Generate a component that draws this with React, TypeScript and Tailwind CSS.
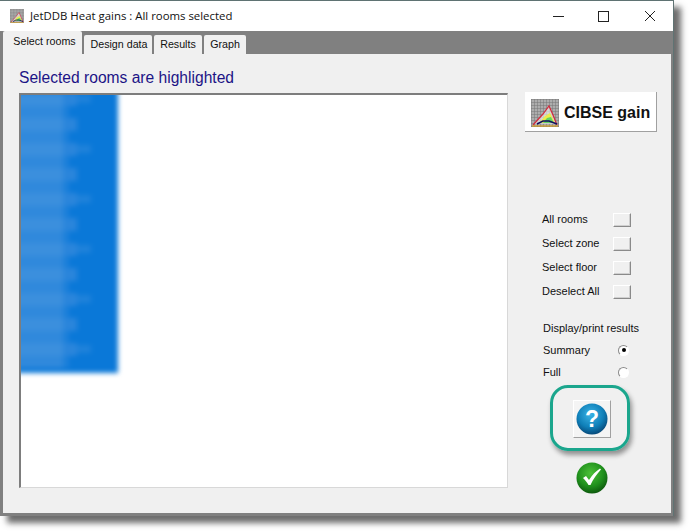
import React from 'react';

const arial = "font-['Liberation_Sans',Arial,sans-serif]";

const ChartIcon = ({ size }: { size: number }) => (
  <svg width={size} height={size} viewBox="0 0 28 28" className="shrink-0">
    <defs>
      <pattern id={`grid${size}`} width="3" height="3" patternUnits="userSpaceOnUse">
        <rect width="3" height="3" fill="#adadad" />
        <path d="M0 0H3M0 0V3" stroke="#777" strokeWidth="1" />
      </pattern>
    </defs>
    <rect width="28" height="28" fill={`url(#grid${size})`} />
    <path d="M3 25 L12 15 L18 7 L22 16 L25 25Z" fill="#f4f4f0" opacity="0.6" />
    <path d="M8 24 L14 17 L19 14 L24 24Z" fill="#ecec4a" />
    <path d="M12 24 L16 19 L20 18 L23 24Z" fill="#63d463" />
    <path d="M2 26 L12 15 L18 7 L22 16 L26 26" fill="none" stroke="#d42a3c" strokeWidth="1.2" />
    <path d="M6 25 L12 22 L18 22 L26 25" fill="none" stroke="#101060" strokeWidth="1.6" />
    <path d="M1 27 H27" stroke="#d8a020" strokeWidth="1.2" />
  </svg>
);

const HelpIcon = () => (
  <svg width="32" height="32" viewBox="0 0 32 32">
    <defs>
      <radialGradient id="helpBall" cx="45%" cy="35%" r="70%">
        <stop offset="0%" stopColor="#3cb4e6" />
        <stop offset="60%" stopColor="#0f7fb8" />
        <stop offset="100%" stopColor="#063f6e" />
      </radialGradient>
    </defs>
    <circle cx="16" cy="16" r="15.5" fill="url(#helpBall)" />
    <text x="16" y="24" textAnchor="middle" fontSize="23" fontWeight="700" fill="#fff" fontFamily="'Liberation Sans', sans-serif">?</text>
  </svg>
);

const OkIcon = () => (
  <svg width="32" height="32" viewBox="0 0 32 32">
    <defs>
      <radialGradient id="okBall" cx="45%" cy="35%" r="70%">
        <stop offset="0%" stopColor="#4cc238" />
        <stop offset="60%" stopColor="#1f8f1c" />
        <stop offset="100%" stopColor="#0b4f0b" />
      </radialGradient>
    </defs>
    <circle cx="16" cy="16" r="15.5" fill="url(#okBall)" />
    <path d="M7 16 L10 14 L13 18 C16 13 20 9 24 6.5 L25 7.5 C21 12 17 17 14.5 23 L12.5 23 C11 20 9 18 7 16Z" fill="#fff" />
  </svg>
);

const tabs = [
  { label: 'Design data', width: 'w-[68px] pl-[2px]' },
  { label: 'Results', width: 'w-[48px]' },
  { label: 'Graph', width: 'w-[42px]' },
];
const selectors = ['All rooms', 'Select zone', 'Select floor', 'Deselect All'];
// smudged room names in the list
const rooms = [0, 1, 2, 3, 4, 5, 6, 7, 8, 9, 10, 11, 12, 13, 14, 15, 16, 17, 18, 19, 20, 21];

export default function App() {
  return (
    <div className="w-[689px] h-[531px] bg-white overflow-hidden">
      <div className={`w-[674px] h-[516px] flex flex-col border-t border-r border-[#5f7373] shadow-[7px_7px_6px_rgba(60,60,60,0.75)] ${arial}`}>
        {/* Title bar */}
        <div className="h-[30px] bg-white flex items-center shrink-0">
          <div className="ml-[10px] mr-[6px]">
            <ChartIcon size={14} />
          </div>
          <span className="text-[11.4px] text-[#111] font-['Open_Sans',sans-serif]">JetDDB Heat gains : All rooms selected</span>
          <div className="ml-auto flex items-center">
            <svg width="46" height="30" viewBox="0 0 46 30"><path d="M18 15.5H29" stroke="#222" /></svg>
            <svg width="46" height="30" viewBox="0 0 46 30"><rect x="17.5" y="10.5" width="10" height="10" fill="none" stroke="#222" /></svg>
            <svg width="46" height="30" viewBox="0 0 46 30"><path d="M18 10L28 20M28 10L18 20" stroke="#222" /></svg>
          </div>
        </div>

        {/* Tab strip */}
        <div className="h-[23px] bg-[#808080] flex items-end pl-[3px] pr-[2px] shrink-0">
          <div className="h-[23px] w-[79px] bg-[#f0f0f0] rounded-t-[2px] text-[10.7px] text-[#111] flex items-center justify-center pb-[2px] pl-[4px]">Select rooms</div>
          {tabs.map((t) => (
            <div key={t.label} className={`h-[19px] ml-[2px] ${t.width} bg-[#f0f0f0] rounded-t-[2px] text-[10.7px] text-[#111] flex items-center justify-center`}>{t.label}</div>
          ))}
        </div>

        {/* Panel */}
        <div className="flex-1 flex bg-[#808080] pl-[3px] pr-[2px] pb-[3px] min-h-0">
          <div className="flex-1 bg-[#f0f0f0] flex pl-[16px] min-w-0">
            <div className="w-[489px] shrink-0 flex flex-col pb-[25px]">
              <div className="h-[39px] flex items-end pb-[6px] text-[15.6px] leading-[18px] text-[#1c1486]">Selected rooms are highlighted</div>
              <div className="flex-1 bg-white border-t-2 border-l-2 border-t-[#7d7d7d] border-l-[#7d7d7d] border-b border-r border-b-[#d8d8d8] border-r-[#d8d8d8] overflow-hidden">
                <div className="-ml-[6px] -mt-[6px] w-[103px] h-[284px] blur-[2.5px] flex flex-col bg-[#0a78d8] pt-[4px]">
                  {rooms.map((i) => (
                    <div key={i} className="h-[12.5px] flex items-center">
                      <div className={i % 2 === 0 ? 'w-[48px] h-full bg-[#3b8fdd]' : 'w-[48px] h-full bg-[#3089dc]'} />
                      <div className={i % 2 === 0 ? 'w-[14px] h-full bg-[#2a85db]' : 'w-[6px] h-full bg-[#1c80da]'} />
                      <div className={i % 4 === 0 ? 'w-[14px] h-[8px] bg-[#1f82da]' : 'hidden'} />
                    </div>
                  ))}
                </div>
              </div>
            </div>

            {/* Right column */}
            <div className="flex-1 flex flex-col items-start pl-[17px] pt-[38px]">
              <div className="w-[132px] h-[40px] bg-white border-r border-b border-[#a0a0a0] flex items-center pl-[6px] pt-[2px] gap-[5px] text-[16px] font-bold text-[#111]">
                <ChartIcon size={28} />
                <span>CIBSE gain</span>
              </div>

              <div className="mt-[80px] flex flex-col gap-[9px] pl-[17px] w-[106px]">
                {selectors.map((s) => (
                  <div key={s} className="h-[15px] flex items-center justify-between text-[11px] text-[#111]">
                    <span>{s}</span>
                    <span className="w-[18px] h-[14px] bg-[#f0f0f0] border border-t-white border-l-white border-r-[#8a8a8a] border-b-[#8a8a8a] shadow-[inset_-1px_-1px_0_#d0d0d0]" />
                  </div>
                ))}
              </div>

              <div className="mt-[22px] pl-[18px] text-[11px] leading-[14px] text-[#111]">Display/print results</div>
              <div className="mt-[8px] pl-[18px] w-[104px] flex items-center justify-between h-[14px] text-[11px] text-[#111]">
                <span>Summary</span>
                <span className="w-[11px] h-[11px] rounded-full bg-white border border-[#8a8a8a] border-b-white border-r-white flex items-center justify-center">
                  <span className="w-[4px] h-[4px] rounded-full bg-black" />
                </span>
              </div>
              <div className="mt-[8px] pl-[18px] w-[104px] flex items-center justify-between h-[14px] text-[11px] text-[#111]">
                <span>Full</span>
                <span className="w-[11px] h-[11px] rounded-full bg-white border border-[#8a8a8a] border-b-white border-r-white" />
              </div>

              {/* Callout round the help button */}
              <div className="mt-[6px] ml-[25px] w-[80px] h-[66px] border-[3px] border-[#1ba68d] rounded-[18px] shadow-[2px_4px_5px_rgba(0,0,0,0.4)] flex items-center justify-center pl-[3px] pt-[2px]">
                <div className="w-[38px] h-[38px] bg-[#f4f4f4] border border-t-white border-l-white border-r-[#a0a0a0] border-b-[#a0a0a0] flex items-center justify-center">
                  <HelpIcon />
                </div>
              </div>
              <div className="mt-[11px] ml-[51px]">
                <OkIcon />
              </div>
            </div>
          </div>
        </div>
      </div>
    </div>
  );
}
